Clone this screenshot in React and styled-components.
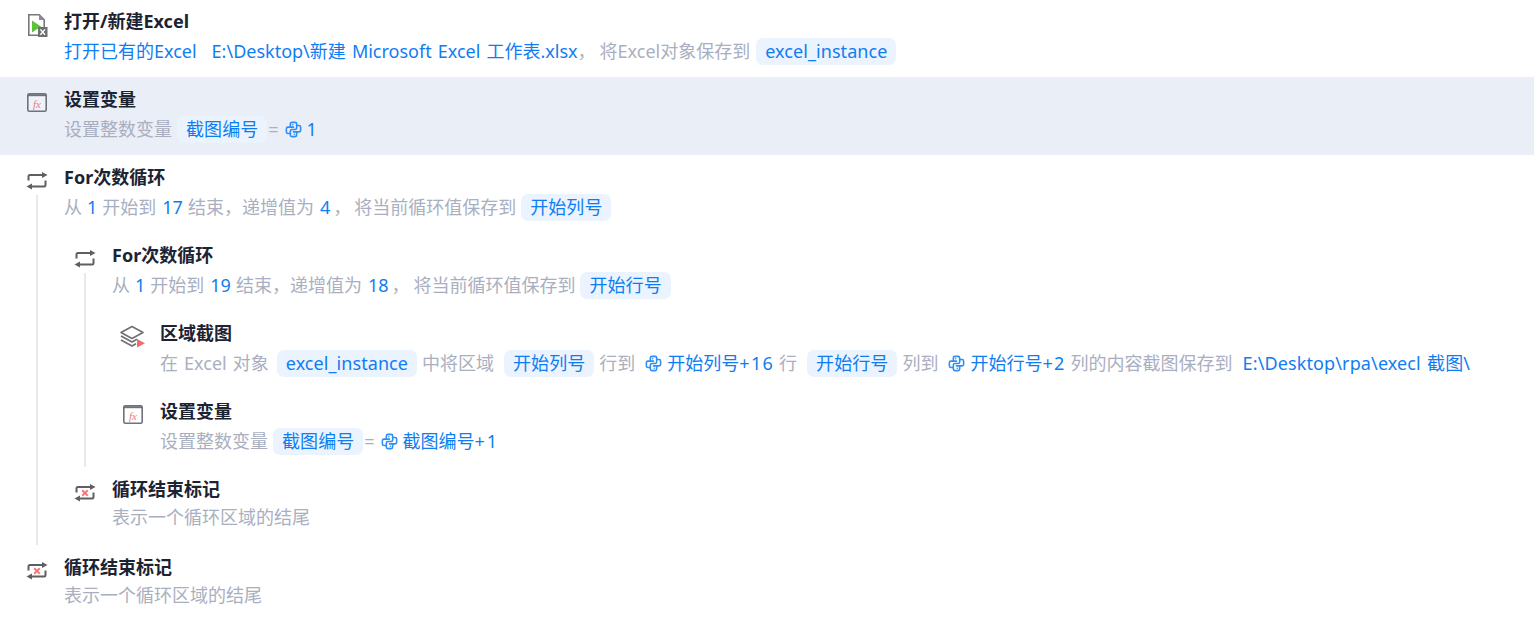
import React from "react";
import styled, { createGlobalStyle } from "styled-components";
import { TbBrandPython } from "react-icons/tb";

const Global = createGlobalStyle`
  html, body { margin: 0; padding: 0; background: #fff; }
  body { font-family: "Noto Sans", "Noto Sans CJK SC", sans-serif; font-size: 18px; }
`;

const Page = styled.div`
  width: 1534px;
  height: 622px;
  overflow: hidden;
  background: #fff;
  margin-top: -1px;
`;

const Block = styled.div`
  margin-left: ${(p) => p.$indent || 0}px;
`;

const Guided = styled.div`
  position: relative;
  &::before {
    content: "";
    position: absolute;
    left: 36px;
    top: 40px;
    bottom: 0;
    width: 2px;
    background: #e8eaf0;
  }
`;

const Row = styled.div`
  display: grid;
  grid-template-columns: 38px 1fr;
  height: 78px;
  box-sizing: border-box;
  padding: 8px 0 0 26px;
  background: ${(p) => (p.$active ? "#e9eef7" : "transparent")};
`;

const IconCell = styled.div`
  width: 24px;
  height: 28px;
  margin-top: 2px;
  svg { display: block; overflow: visible; }
`;

const Body = styled.div`
  min-width: 0;
`;

const Title = styled.div`
  font-size: 18px;
  font-weight: 700;
  line-height: 28px;
  color: #1c2333;
`;

const Desc = styled.div`
  display: flex;
  align-items: center;
  height: 28px;
  margin-top: ${(p) => (p.$compact ? 0 : 2)}px;
  white-space: pre;
  word-spacing: 1.4px;
  line-height: 28px;
  color: #a9afc0;
`;

const Plain = styled.span`
  margin-left: ${(p) => p.$ml || 0}px;
`;

const Val = styled.span`
  color: #0f7df2;
  margin-left: ${(p) => p.$ml || 0}px;
  letter-spacing: ${(p) => p.$ls || 0}px;
`;

const Num = styled.span`
  letter-spacing: ${(p) => p.$ls || 1.3}px;
`;

const Chip = styled.span`
  display: inline-flex;
  align-items: center;
  height: 27px;
  padding: 0 9px;
  border-radius: 7px;
  background: #ebf3fe;
  color: #0f7df2;
  letter-spacing: 0.07px;
  margin-left: ${(p) => p.$ml || 0}px;
`;

const Py = styled(TbBrandPython)`
  color: #2f8ff5;
  width: 19px;
  height: 19px;
  flex: none;
  margin-left: ${(p) => p.$ml || 0}px;
  margin-right: 4px;
`;

const Svg = ({ children }) => (
  <svg width="24" height="28" viewBox="0 0 24 28" fill="none">{children}</svg>
);

const ExcelIcon = () => (
  <Svg>
    <path d="M2.8 5.8h10.4l5 5v15.4H2.8z" fill="#fff" stroke="#77777c" strokeWidth="1.6" />
    <path d="M13 5.8v5.2h5.2z" fill="#8c8c90" />
    <path d="M6 11.5l9 6-9 6z" fill="#5cc13c" />
    <rect x="12" y="18" width="9.5" height="10" fill="#6f6f73" />
    <path d="M14.4 20.4l4.6 5.4M19 20.4l-4.6 5.4" stroke="#fff" strokeWidth="1.4" />
  </Svg>
);

const FxIcon = () => (
  <Svg>
    <rect x="1.8" y="6.8" width="18.4" height="17.4" rx="1.5" fill="#fff" fillOpacity=".3" stroke="#71717a" strokeWidth="1.6" />
    <path d="M1.8 8.2h18.4" stroke="#71717a" strokeWidth="2" />
    <text x="7" y="20.5" fontFamily="Liberation Serif, serif" fontStyle="italic" fontSize="11" fill="#f0777c">fx</text>
  </Svg>
);

const LoopPaths = () => (
  <>
    <path d="M2.5 15.5V11.2a1.2 1.2 0 0 1 1.2-1.2H17" stroke="#5f5f63" strokeWidth="2" />
    <path d="M16 7l5.5 3-5.5 3z" fill="#5f5f63" />
    <path d="M19.5 15.5v4.8a1.2 1.2 0 0 1-1.2 1.2H5" stroke="#5f5f63" strokeWidth="2" />
    <path d="M6 18.5l-5.5 3 5.5 3z" fill="#5f5f63" />
  </>
);

const LoopIcon = () => <Svg><LoopPaths /></Svg>;

const LoopEndIcon = () => (
  <Svg>
    <LoopPaths />
    <path d="M8.2 13.2l5.6 5.6M13.8 13.2l-5.6 5.6" stroke="#f4787c" strokeWidth="2" />
  </Svg>
);

const LayersIcon = () => (
  <Svg>
    <path d="M10 5.5l11 6-11 6-11-6z" stroke="#6f6f76" strokeWidth="1.6" strokeLinejoin="round" />
    <path d="M-1 15l11 6 5-2.7M-1 19l11 6 4-2.2" stroke="#6f6f76" strokeWidth="1.6" strokeLinejoin="round" />
    <path d="M15 18l8 4.3-8 4.3z" fill="#f4696e" />
  </Svg>
);

const Step = ({ icon, title, active, compact, children }) => (
  <Row $active={active}>
    <IconCell>{icon}</IconCell>
    <Body>
      <Title>{title}</Title>
      <Desc $compact={compact}>{children}</Desc>
    </Body>
  </Row>
);

const LoopEnd = () => (
  <Step compact icon={<LoopEndIcon />} title="循环结束标记">
    <Plain>表示一个循环区域的结尾</Plain>
  </Step>
);

export default function App() {
  return (
    <Page>
      <Global />
      <Step icon={<ExcelIcon />} title="打开/新建Excel">
        <Val>打开已有的Excel</Val>
        <Val $ml={15}>E:\Desktop\新建 Microsoft Excel 工作表.xlsx</Val>
        <Plain>，</Plain>
        <Plain $ml={4}>将Excel对象保存到</Plain>
        <Chip $ml={6}>excel_instance</Chip>
      </Step>
      <Step active icon={<FxIcon />} title="设置变量">
        <Plain>设置整数变量</Plain>
        <Chip $ml={5}>截图编号</Chip>
        <Plain $ml={1}>=</Plain>
        <Py $ml={5} />
        <Val>1</Val>
      </Step>
      <Guided>
        <Step icon={<LoopIcon />} title="For次数循环">
          <Plain>从</Plain>
          <Val $ml={5}>1</Val>
          <Plain $ml={5}>开始到</Plain>
          <Val $ml={6}>17</Val>
          <Plain $ml={5}>结束，递增值为</Plain>
          <Val $ml={6}>4</Val>
          <Plain $ml={3}>，</Plain>
          <Plain $ml={3}>将当前循环值保存到</Plain>
          <Chip $ml={5}>开始列号</Chip>
        </Step>
        <Block $indent={48}>
          <Guided>
            <Step icon={<LoopIcon />} title="For次数循环">
              <Plain>从</Plain>
              <Val $ml={5}>1</Val>
              <Plain $ml={5}>开始到</Plain>
              <Val $ml={6}>19</Val>
              <Plain $ml={5}>结束，递增值为</Plain>
              <Val $ml={6}>18</Val>
              <Plain $ml={3}>，</Plain>
              <Plain $ml={4}>将当前循环值保存到</Plain>
              <Chip $ml={5}>开始行号</Chip>
            </Step>
            <Block $indent={48}>
              <Step icon={<LayersIcon />} title="区域截图">
                <Plain>在 Excel 对象</Plain>
                <Chip $ml={8}>excel_instance</Chip>
                <Plain $ml={5}>中将区域</Plain>
                <Chip $ml={10}>开始列号</Chip>
                <Plain $ml={5}>行到</Plain>
                <Py $ml={9} />
                <Val>开始列号<Num>+16</Num></Val>
                <Plain $ml={5}>行</Plain>
                <Chip $ml={10}>开始行号</Chip>
                <Plain $ml={5}>列到</Plain>
                <Py $ml={9} />
                <Val>开始行号<Num>+2</Num></Val>
                <Plain $ml={5}>列的内容截图保存到</Plain>
                <Val $ml={10} $ls={0.12}>E:\Desktop\rpa\execl 截图\</Val>
              </Step>
              <Step icon={<FxIcon />} title="设置变量">
                <Plain>设置整数变量</Plain>
                <Chip $ml={5}>截图编号</Chip>
                <Plain $ml={1}>=</Plain>
                <Py $ml={5} />
                <Val>截图编号<Num $ls={2}>+1</Num></Val>
              </Step>
            </Block>
          </Guided>
          <LoopEnd />
        </Block>
      </Guided>
      <LoopEnd />
    </Page>
  );
}
